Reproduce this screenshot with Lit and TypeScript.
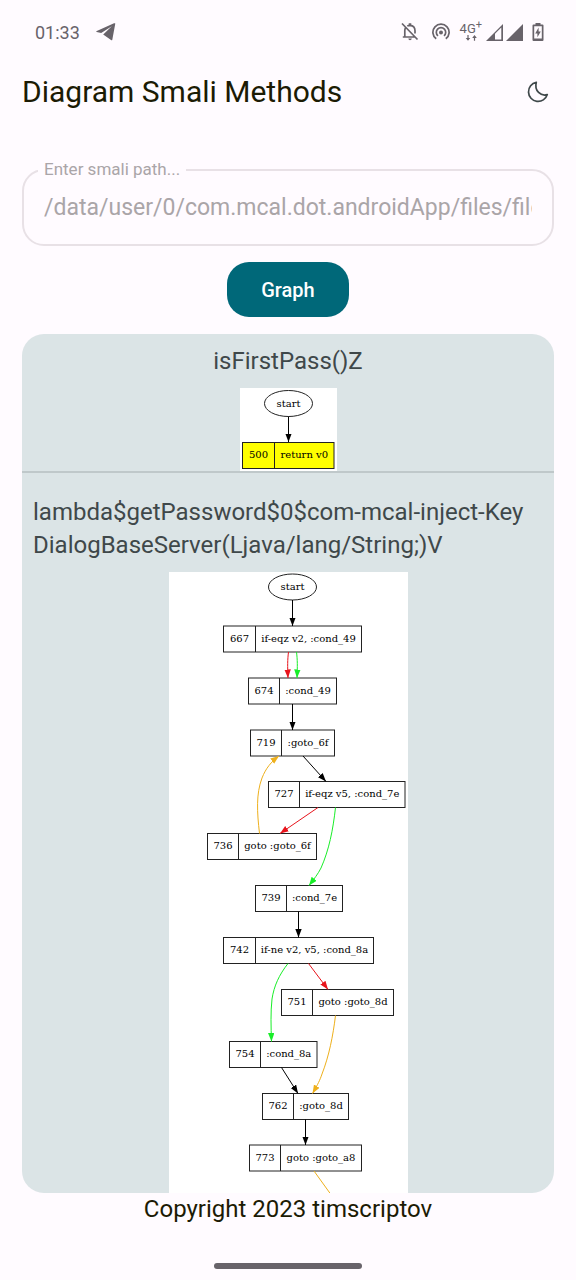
import { LitElement, html, svg, css } from 'lit';
import { customElement, property, state } from 'lit/decorators.js';

interface GraphNode {
  id: string;
  code: string;
  x: number;
  split: number;
  right: number;
  y: number;
  fill?: string;
}

interface GraphEdge {
  color: 'black' | 'red' | 'green' | 'orange';
  d: string;
}

interface Graph {
  width: number;
  height: number;
  start: [number, number];
  nodes: GraphNode[];
  edges: GraphEdge[];
}

const COLORS = { black: '#000', red: '#e8141c', green: '#18ee28', orange: '#eeb01c' };

const FIRST_PASS: Graph = {
  width: 97,
  height: 83,
  start: [48.5, 15.5],
  nodes: [{ id: '500', code: 'return v0', x: 2.5, split: 34.5, right: 94, y: 54.5, fill: '#ff0' }],
  edges: [{ color: 'black', d: 'M48.5 28.5V54' }],
};

const GET_PASSWORD: Graph = {
  width: 239,
  height: 660,
  start: [123.5, 15],
  nodes: [
    { id: '667', code: 'if-eqz v2, :cond_49', x: 54.5, split: 86.5, right: 192.5, y: 54 },
    { id: '674', code: ':cond_49', x: 79.5, split: 110.5, right: 167.5, y: 106 },
    { id: '719', code: ':goto_6f', x: 81.5, split: 112.5, right: 165.5, y: 158 },
    { id: '727', code: 'if-eqz v5, :cond_7e', x: 99.5, split: 130.5, right: 236, y: 209.5 },
    { id: '736', code: 'goto :goto_6f', x: 38.5, split: 69.5, right: 147.5, y: 261.5 },
    { id: '739', code: ':cond_7e', x: 86.5, split: 117.5, right: 173.5, y: 313.5 },
    { id: '742', code: 'if-ne v2, v5, :cond_8a', x: 54.5, split: 86.5, right: 204.5, y: 365.5 },
    { id: '751', code: 'goto :goto_8d', x: 112.5, split: 143.5, right: 224.5, y: 417.5 },
    { id: '754', code: ':cond_8a', x: 60.5, split: 91.5, right: 148, y: 469.5 },
    { id: '762', code: ':goto_8d', x: 93.5, split: 124.5, right: 179.5, y: 521.5 },
    { id: '773', code: 'goto :goto_a8', x: 80.5, split: 111.5, right: 192.5, y: 573 },
  ],
  edges: [
    { color: 'black', d: 'M123.5 28V54' },
    { color: 'red', d: 'M119.5 80C118.5 88 118.5 94 119 106' },
    { color: 'green', d: 'M127.5 80C128.5 88 128.5 94 128 106' },
    { color: 'black', d: 'M123.5 132V158' },
    { color: 'black', d: 'M134 184L157 209.5' },
    { color: 'red', d: 'M149 235.5L111 261.5' },
    { color: 'orange', d: 'M90.5 261.5C88 240 87 222 93 206C97 196 102 190 110 184' },
    { color: 'green', d: 'M166.5 235.5C164 258 160 278 152 296C149 302 145 307 140 313.5' },
    { color: 'black', d: 'M129.5 339.5V365.5' },
    { color: 'green', d: 'M119 391.5C110 403 105 414 103 427C101.5 440 102 455 102.5 469.5' },
    { color: 'red', d: 'M139.5 391.5L159 417.5' },
    { color: 'orange', d: 'M166.5 443.5C164 464 160 484 153 502C151 508 149 512 143.5 521.5' },
    { color: 'black', d: 'M112.5 495.5L129 521.5' },
    { color: 'black', d: 'M136.5 547.5V573' },
    { color: 'orange', d: 'M145 599L186 656' },
  ],
};

@customElement('method-graph')
class MethodGraph extends LitElement {
  @property({ attribute: false }) graph!: Graph;

  static styles = css`
    :host {
      display: block;
    }
    .canvas {
      display: block;
      background: #fff;
    }
    .edge {
      fill: none;
      stroke-width: 1;
    }
    .shape {
      stroke: #222;
      stroke-width: 1;
    }
    .code {
      font: 10px "DejaVu Serif", serif;
      fill: #000;
      text-anchor: middle;
    }
  `;

  render() {
    const g = this.graph;
    return html`<svg class="canvas" width=${g.width} height=${g.height} viewBox="0 0 ${g.width} ${g.height}">
      <defs>
        ${Object.entries(COLORS).map(
          ([name, color]) => svg`<marker id="tip-${name}" markerUnits="userSpaceOnUse" markerWidth="10" markerHeight="7"
            refX="8.5" refY="3.2" orient="auto"><path d="M0 0L8.5 3.2L0 6.4Z" fill=${color} /></marker>`
        )}
      </defs>
      <ellipse class="shape" cx=${g.start[0]} cy=${g.start[1]} rx="24" ry="13" fill="#fff" />
      <text class="code" x=${g.start[0]} y=${g.start[1] + 3}>start</text>
      ${g.nodes.map(
        (n) => svg`
          <rect class="shape" x=${n.x} y=${n.y} width=${n.right - n.x} height="26" fill=${n.fill ?? '#fff'} />
          <path class="shape" d="M${n.split} ${n.y}v26" />
          <text class="code" x=${(n.x + n.split) / 2} y=${n.y + 15.5}>${n.id}</text>
          <text class="code" x=${(n.split + n.right) / 2} y=${n.y + 15.5}>${n.code}</text>`
      )}
      ${g.edges.map(
        (e) => svg`<path class="edge" d=${e.d} stroke=${COLORS[e.color]} marker-end="url(#tip-${e.color})" />`
      )}
    </svg>`;
  }
}

@customElement('status-bar')
class StatusBar extends LitElement {
  static styles = css`
    :host {
      display: flex;
      align-items: center;
      height: 64px;
      padding: 0 32px 0 35px;
      box-sizing: border-box;
      color: #68636a;
      font: 400 18px Roboto, sans-serif;
    }
    svg {
      display: block;
      fill: currentColor;
    }
    .plane {
      margin-left: 16px;
    }
    .icons {
      display: flex;
      align-items: center;
      margin-left: auto;
    }
    .hotspot {
      margin-left: 12px;
    }
    .network {
      display: flex;
      flex-direction: column;
      align-items: center;
      margin: 0 4px 0 10px;
      font-size: 13px;
      line-height: 12px;
    }
    .network sup {
      font-size: 11px;
      line-height: 1px;
    }
    .battery {
      margin-left: 9px;
    }
    .second {
      margin-left: 3px;
    }
  `;

  render() {
    return html`
      <span>01:33</span>
      <svg class="plane" width="20" height="18" viewBox="0 0 20 18">
        <path d="M19.3 0.6L16.3 16.8Q16 17.7 15 17.1L7.2 11.6L15.8 3.3L5.2 10L0.7 9Q-0.3 8.6 0.8 8.1L18 0.3Q19.3 -0.1 19.3 0.6Z" />
      </svg>
      <div class="icons">
        <svg width="20" height="20" viewBox="0 0 20 20">
          <g fill="none" stroke="currentColor" stroke-width="1.7">
            <path d="M2 1.5L17.5 17.5M2.8 15H15M4.8 15V8.5Q4.8 6.8 5.7 5.5M7.3 4Q8.5 3.3 10 3.3Q15 3.8 15 8.8V11.5" />
          </g>
          <path d="M8.7 1.2h2.6v2.2H8.7ZM8.3 16.5h3.6Q11.5 18.3 10 18.3T8.3 16.5Z" />
        </svg>
        <svg class="hotspot" width="18" height="18" viewBox="0 0 18 18">
          <g fill="none" stroke="currentColor" stroke-width="1.7">
            <path d="M4.2 15.8A8.1 8.1 0 1 1 13.8 15.8" />
            <path d="M6 12.9A4.7 4.7 0 1 1 12 12.9" />
          </g>
          <circle cx="9" cy="9.5" r="2" />
        </svg>
        <div class="network">
          <span>4G<sup>+</sup></span>
          <svg width="12" height="6" viewBox="0 0 12 6">
            <path d="M2.4 0h1.2v3H5.3L3 5.8L0.7 3H2.4ZM8.9 5.8h1.2V2.9h1.7L9.5 0.1L7.2 2.9h1.7Z" />
          </svg>
        </div>
        <svg width="17" height="17" viewBox="0 0 17 17">
          <path fill-rule="evenodd" d="M0 17L17 0V17ZM9 9.8V15.5H15.3V3.6Z" />
        </svg>
        <svg class="second" width="17" height="17" viewBox="0 0 17 17"><path d="M0 17L17 0V17Z" /></svg>
        <svg class="battery" width="12" height="18" viewBox="0 0 12 18">
          <path fill-rule="evenodd" d="M3.5 0H8.5V1.5H10.5Q11.5 1.5 11.5 2.5V17Q11.5 18 10.5 18H1.5Q0.5 18 0.5 17V2.5Q0.5 1.5 1.5 1.5H3.5ZM2.2 3.2V15.5H9.8V3.2ZM6.6 4.5V8.4H8.8L5.4 14.3V10.4H3.2Z" />
        </svg>
      </div>
    `;
  }
}

@customElement('app-root')
class AppRoot extends LitElement {
  @state() private path = '/data/user/0/com.mcal.dot.androidApp/files/file.smali';

  static styles = css`
    :host {
      display: flex;
      flex-direction: column;
      height: 100vh;
      background: #fffbff;
      color: #1c1b04;
      font-family: Roboto, "Noto Sans", sans-serif;
    }
    .bar {
      display: flex;
      align-items: center;
      justify-content: space-between;
      height: 56px;
      padding: 0 22px;
    }
    .title {
      margin: 0;
      font-size: 30px;
      line-height: 40px;
      font-weight: 400;
    }
    .theme {
      display: grid;
      place-items: center;
      width: 32px;
      height: 32px;
      padding: 0;
      border: 0;
      background: none;
      color: #3f484a;
    }
    .form {
      display: flex;
      flex-direction: column;
      gap: 16px;
      align-items: center;
      padding: 49px 22px 17px;
    }
    .field {
      position: relative;
      width: 100%;
      height: 77px;
      box-sizing: border-box;
      border: 2px solid #e8e1e6;
      border-radius: 22px;
      padding: 0 20px;
    }
    .label {
      position: absolute;
      top: -12px;
      left: 14px;
      padding: 0 6px;
      background: #fffbff;
      color: #aaa5a8;
      font-size: 17px;
      line-height: 20px;
    }
    .input {
      display: block;
      width: 100%;
      height: 100%;
      padding: 0;
      border: 0;
      outline: 0;
      background: none;
      color: #aaa5a8;
      font: 23px Roboto, sans-serif;
    }
    .submit {
      height: 55px;
      padding: 0 34px;
      border: 0;
      border-radius: 22px;
      background: #006879;
      color: #fff;
      font: 500 20px Roboto, sans-serif;
    }
    .list {
      flex: 1;
      min-height: 0;
      margin: 0 22px;
      overflow: auto;
      scrollbar-width: none;
      border-radius: 22px;
      background: #dbe4e6;
      color: #3f484a;
    }
    .method {
      display: flex;
      flex-direction: column;
      align-items: center;
      gap: 10px;
      padding-top: 11px;
    }
    .method + .method {
      padding-top: 23px;
      border-top: 2px solid #bfc8ca;
    }
    .name {
      margin: 0;
      padding: 0 11px;
      font-size: 24px;
      line-height: 33px;
      font-weight: 400;
    }
    .footer {
      text-align: center;
      font-size: 24px;
      line-height: 32px;
    }
    .nav {
      display: flex;
      justify-content: center;
      padding: 38px 0 11px;
    }
    .handle {
      width: 148px;
      height: 6px;
      border-radius: 3px;
      background: #68636a;
    }
  `;

  render() {
    return html`
      <status-bar></status-bar>
      <header class="bar">
        <h1 class="title">Diagram Smali Methods</h1>
        <button class="theme" aria-label="Dark theme">
          <svg width="22" height="22" viewBox="0 0 22 22" fill="none" stroke="currentColor" stroke-width="1.7" stroke-linejoin="round">
            <path d="M9.3 1.4A9.6 9.6 0 1 0 20.3 13.6C14 15.5 7 10 9.3 1.4Z" />
          </svg>
        </button>
      </header>
      <form class="form" @submit=${(e: Event) => e.preventDefault()}>
        <div class="field">
          <label class="label" for="path">Enter smali path...</label>
          <input
            class="input"
            id="path"
            type="text"
            spellcheck="false"
            .value=${this.path}
            @input=${(e: Event) => (this.path = (e.target as HTMLInputElement).value)}
          />
        </div>
        <button class="submit">Graph</button>
      </form>
      <main class="list">
        <section class="method">
          <h2 class="name">isFirstPass()Z</h2>
          <method-graph .graph=${FIRST_PASS}></method-graph>
        </section>
        <section class="method">
          <h2 class="name">lambda$getPassword$0$com-mcal-inject-Key<wbr />DialogBaseServer(Ljava/lang/String;)V</h2>
          <method-graph .graph=${GET_PASSWORD}></method-graph>
        </section>
      </main>
      <footer class="footer">Copyright 2023 timscriptov</footer>
      <div class="nav"><div class="handle"></div></div>
    `;
  }
}
